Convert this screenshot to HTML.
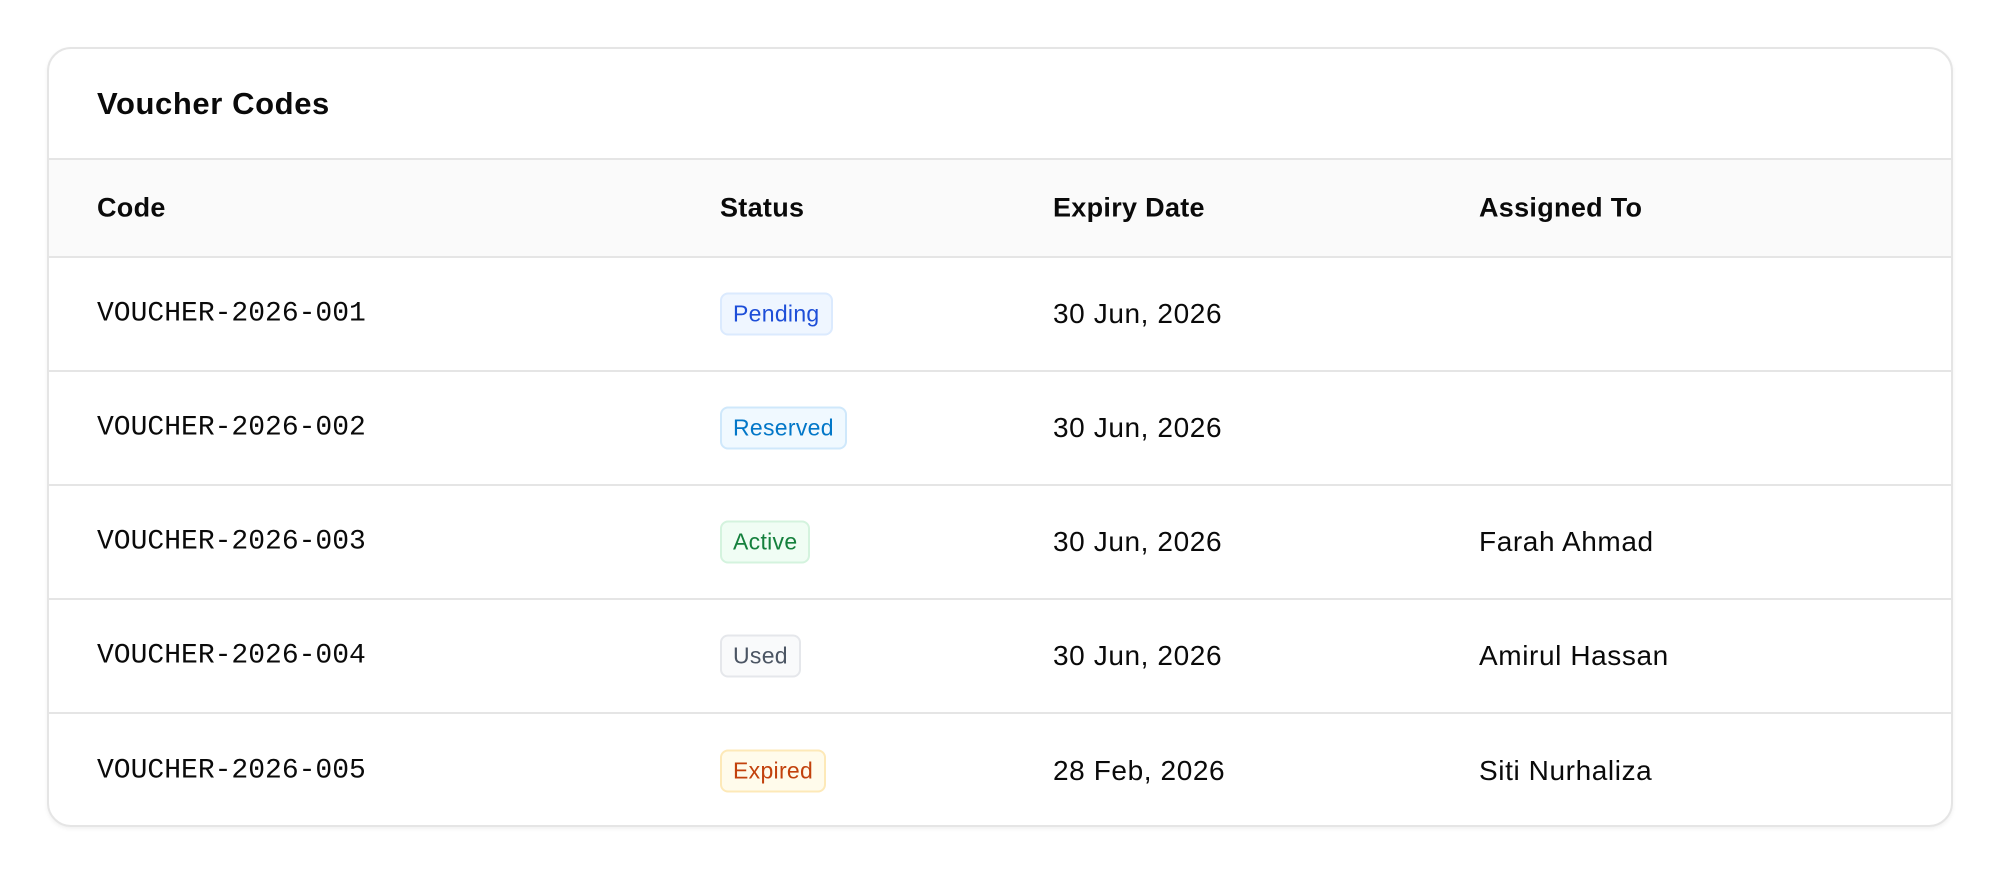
<!DOCTYPE html>
<html><head><meta charset="utf-8"><style>
*{box-sizing:border-box;margin:0;padding:0}
body{width:2000px;height:874px;background:#fff;font-family:"Liberation Sans",sans-serif;color:#0a0a0a;position:relative;overflow:hidden}
.card{position:absolute;left:47px;top:47px;width:1906px;height:780px;border:2px solid #e5e5e5;border-radius:24px;overflow:hidden;box-shadow:0 2px 4px rgba(0,0,0,.06)}
.title{height:111px;display:flex;align-items:center;padding-left:48px;font-size:31px;font-weight:bold;border-bottom:2px solid #e5e5e5;letter-spacing:0.6px}
.row{position:absolute;left:0;right:0;border-bottom:2px solid #e5e5e5;font-size:28px;letter-spacing:0.6px}
.row>div{position:absolute;top:50%;transform:translateY(-50%);white-space:nowrap}
.hdr{background:#fafafa;font-weight:bold;font-size:27px;letter-spacing:0.3px}
.c1{left:48px}.c2{left:671px}.c3{left:1004px}.c4{left:1430px}
.mono{font-family:"Liberation Mono",monospace;font-size:28px;letter-spacing:0}
.b{display:inline-block;font-size:23px;padding:6px 11px;border-radius:8px;border:2px solid;letter-spacing:0.3px}
</style></head><body>
<div class="card">
<div class="title">Voucher Codes</div>
<div class="row hdr" style="top:111px;height:98px"><div class="c1">Code</div><div class="c2">Status</div><div class="c3">Expiry Date</div><div class="c4">Assigned To</div></div>
<div class="row" style="top:209px;height:114px"><div class="c1 mono">VOUCHER-2026-001</div><div class="c2"><span class="b" style="background:#eff6ff;border-color:#dbeafe;color:#1d4ed8">Pending</span></div><div class="c3">30 Jun, 2026</div></div>
<div class="row" style="top:323px;height:114px"><div class="c1 mono">VOUCHER-2026-002</div><div class="c2"><span class="b" style="background:#f0f9ff;border-color:#cfe8fb;color:#0277c8">Reserved</span></div><div class="c3">30 Jun, 2026</div></div>
<div class="row" style="top:437px;height:114px"><div class="c1 mono">VOUCHER-2026-003</div><div class="c2"><span class="b" style="background:#f0fdf4;border-color:#d4f3de;color:#15803d">Active</span></div><div class="c3">30 Jun, 2026</div><div class="c4">Farah Ahmad</div></div>
<div class="row" style="top:551px;height:114px"><div class="c1 mono">VOUCHER-2026-004</div><div class="c2"><span class="b" style="background:#f9fafb;border-color:#e5e7eb;color:#4b5563">Used</span></div><div class="c3">30 Jun, 2026</div><div class="c4">Amirul Hassan</div></div>
<div class="row" style="top:665px;height:114px;border-bottom:none"><div class="c1 mono">VOUCHER-2026-005</div><div class="c2"><span class="b" style="background:#fffbeb;border-color:#fde9b8;color:#c2410c">Expired</span></div><div class="c3">28 Feb, 2026</div><div class="c4">Siti Nurhaliza</div></div>
</div>
</body></html>
